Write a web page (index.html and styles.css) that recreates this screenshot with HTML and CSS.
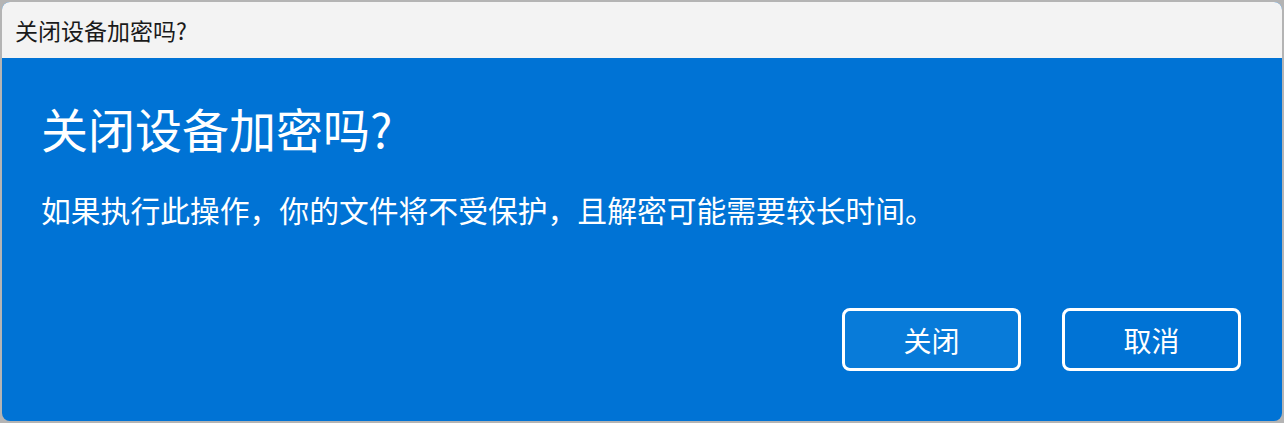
FILE: index.html
```html
<!doctype html>
<html>
<head>
<meta charset="utf-8">
<title>关闭设备加密吗?</title>
<link rel="stylesheet" href="styles.css">
</head>

<body>
<div class="dialog">
    <div class="titlebar">关闭设备加密吗?</div>
    <div class="content">
        <h1 class="heading">关闭设备加密吗?</h1>
        <p class="message">如果执行此操作，你的文件将不受保护，且解密可能需要较长时间。</p>
        <div class="actions">
            <button class="btn btn-focus">关闭</button>
            <button class="btn">取消</button>
        </div>
    </div>
</div>
</body>
</html>
```

FILE: styles.css
```css
html,body,div,h1,p{margin:0;padding:0;}
body{background:#b4b4b4;font-family:"Noto Sans CJK SC","Liberation Sans",sans-serif;width:1284px;height:423px;overflow:hidden;}
.dialog{margin:2px 2px 0 2px;height:419px;border-radius:8px;overflow:hidden;display:flex;flex-direction:column;background:#0073d5;}
.titlebar{height:56px;background:#f3f3f3;color:#1a1a1a;font-size:23px;line-height:56px;padding-left:13px;}
.content{flex:1;padding:0 39px;color:#fff;display:flex;flex-direction:column;}
.heading{font-weight:400;font-size:47px;line-height:56px;margin-top:42px;}
.message{font-size:29.8px;line-height:40px;margin-top:33px;}
.actions{margin-top:auto;margin-bottom:50px;margin-right:2px;display:flex;justify-content:flex-end;gap:41px;}
.btn{width:179px;height:63px;border:3px solid #fff;border-radius:8px;background:#0073d5;color:#fff;font-family:inherit;font-size:28px;padding:0;}
.btn-focus{background:#087bd9;}
```
